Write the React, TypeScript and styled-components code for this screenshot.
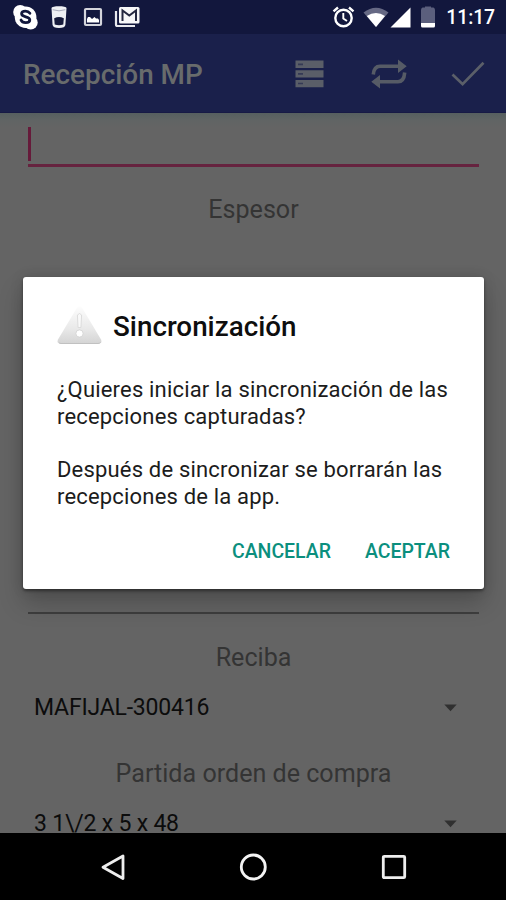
import React from "react";
import styled, { createGlobalStyle } from "styled-components";

const Global = createGlobalStyle`
  * { box-sizing: border-box; }
  body { margin: 0; background: #000; font-family: Roboto, "Liberation Sans", sans-serif; }
  svg { display: block; flex: none; }
`;

const Screen = styled.div`
  position: relative;
  width: 506px;
  height: 900px;
  display: flex;
  flex-direction: column;
  overflow: hidden;
`;

const StatusBar = styled.header`
  height: 34px;
  flex: none;
  display: flex;
  align-items: center;
  justify-content: space-between;
  padding: 0 11px 0 12px;
  background: #12173d;
`;

const StatusGroup = styled.div`
  display: flex;
  align-items: center;
`;

const Clock = styled.span`
  margin-left: 10px;
  padding-top: 2px;
  font-size: 19.4px;
  font-weight: 500;
  line-height: 32px;
  color: #fff;
  letter-spacing: -0.1px;
`;

const Toolbar = styled.div`
  height: 79px;
  flex: none;
  display: flex;
  align-items: center;
  justify-content: space-between;
  padding: 2px 21px 0 23px;
  background: #1a204b;
  border-bottom: 1px solid #171a45;
`;

const ToolbarTitle = styled.h1`
  margin: 0;
  padding-top: 2px;
  font-size: 27.9px;
  font-weight: 500;
  line-height: 36px;
  color: #686b6c;
`;

const Form = styled.main`
  height: 720px;
  flex: none;
  padding: 13px 27px 0 28px;
  overflow: hidden;
  background: linear-gradient(#566060 0, #606464 7px, #646464 14px);
`;

const TextField = styled.div<{ $focused?: boolean }>`
  display: flex;
  height: ${(p) => (p.$focused ? 41 : 46)}px;
  border-bottom: ${(p) => (p.$focused ? "3px solid #66233f" : "2px solid #3e3e3e")};
`;

const Caret = styled.div`
  width: 3px;
  height: 34px;
  margin-top: 1px;
  background: #661a3a;
`;

const FieldLabel = styled.div<{ $top: number }>`
  margin-top: ${(p) => p.$top}px;
  text-align: center;
  font-size: 25.1px;
  line-height: 34px;
  color: #343434;
  white-space: nowrap;
`;

const Gap = styled.div`
  height: 341px;
`;

const Spinner = styled.div<{ $top: number }>`
  margin-top: ${(p) => p.$top}px;
  height: 34px;
  padding: 0 22px 0 6px;
  display: flex;
  align-items: center;
  justify-content: space-between;
  font-size: 23px;
  letter-spacing: -0.2px;
  line-height: 34px;
  color: #0c0c0c;
  white-space: pre;
`;

const NavBar = styled.nav`
  height: 67px;
  flex: none;
  display: flex;
  align-items: center;
  justify-content: center;
  gap: 114px;
  background: #000;
`;

const Dialog = styled.section`
  position: absolute;
  left: 23px;
  top: 277px;
  width: 461px;
  height: 312px;
  padding: 27px 34px 0 34px;
  display: flex;
  flex-direction: column;
  background: #fff;
  border-radius: 3px;
  box-shadow: 0 14px 24px rgba(0, 0, 0, 0.22), 0 2px 3px rgba(0, 0, 0, 0.4), 0 0 14px rgba(0, 0, 0, 0.12);
`;

const DialogHead = styled.div`
  display: flex;
  align-items: center;
  gap: 11px;
  height: 44px;
`;

const DialogTitle = styled.h2`
  margin: 0;
  padding-top: 2px;
  font-size: 27.8px;
  font-weight: 500;
  line-height: 36px;
  color: #0e0e0e;
`;

const Message = styled.p`
  margin: 29px 0 0;
  font-size: 22px;
  line-height: 26.7px;
  letter-spacing: 0.18px;
  color: #1c1c1c;
  white-space: pre;
`;

const Buttons = styled.div`
  margin-top: 27px;
  display: flex;
  justify-content: flex-end;
  gap: 34px;
`;

const TextButton = styled.button`
  padding: 0;
  border: 0;
  background: none;
  font: 500 19.5px/28px Roboto, "Liberation Sans", sans-serif;
  letter-spacing: -0.02px;
  color: #0b8f7e;
`;

const SkypeIcon = () => (
  <svg width="28" height="28" viewBox="0 0 28 28">
    <g fill="#fff">
      <circle cx="13.6" cy="14.2" r="10.8" />
      <circle cx="8.2" cy="9" r="7" />
      <circle cx="18.7" cy="19.6" r="7" />
    </g>
    <path d="M17.900 10.300c-1-1.500-2.400-2.200-4.400-2.200-2.300 0-3.900 1-3.900 2.700 0 4 8.200 2 8.200 6 0 1.900-1.700 2.900-4.100 2.900-2.300 0-4-.9-4.700-2.700" fill="none" stroke="#12173d" strokeWidth="2.800" strokeLinecap="round" />
  </svg>
);

const CupIcon = () => (
  <svg width="18" height="24" viewBox="0 0 18 24">
    <path d="M1.500 3C1.500.5 16.500.5 16.500 3L15.400 20Q15 23 9 23T2.600 20Z" fill="#eff0f4" />
    <path d="M2.700 4.700Q9 7 15.300 4.700" fill="none" stroke="#a8abba" strokeWidth="1" />
    <path d="M4.200 13.200Q9 11 13.800 13.200L13.300 19.400Q9 21 4.700 19.400Z" fill="#161a3b" />
  </svg>
);

const PictureIcon = () => (
  <svg width="20" height="20" viewBox="0 0 20 20">
    <rect x="2" y="2" width="16" height="16" rx="1" fill="#12173d" stroke="#d4d5dc" strokeWidth="2.200" />
    <path d="M4 15.500V12L5 10H7L9 12 11.500 10 13 11.500H15L16 13V15.500Z" fill="#fff" />
  </svg>
);

const MailIcon = () => (
  <svg width="26" height="22" viewBox="0 0 26 22">
    <path d="M2 5V18.500Q2 20 3.500 20H21" fill="none" stroke="#e8e9ee" strokeWidth="2.200" />
    <rect x="5" y="1" width="20.500" height="16.500" rx="1.500" fill="#f7f7f8" />
    <path d="M8.500 15V4.500L15.300 9.500 22 4.500V15" fill="none" stroke="#24273f" strokeWidth="2" />
  </svg>
);

const AlarmIcon = () => (
  <svg width="23" height="22" viewBox="0 0 23 22" fill="none" stroke="#fff">
    <circle cx="11.500" cy="12" r="8.200" strokeWidth="2.400" />
    <path d="M1.500 5.300L6 1.500M21.500 5.300L17 1.500" strokeWidth="2.400" />
    <path d="M11.300 7V12.500L15 15" strokeWidth="1.900" />
  </svg>
);

const WifiIcon = () => (
  <svg width="26" height="21" viewBox="0 0 26 21">
    <path d="M.5 5.500Q13-4 25.500 5.500L13 20Z" fill="#666984" />
    <path d="M3.800 9Q13 3 22 9L13 20Z" fill="#fff" />
  </svg>
);

const SignalIcon = () => (
  <svg width="21" height="21" viewBox="0 0 21 21">
    <path d="M20.500.5V20.500H.5Z" fill="#fff" />
  </svg>
);

const BatteryIcon = () => (
  <svg width="16" height="22" viewBox="0 0 16 22">
    <path d="M5 .5H11V1.500H13.500Q15 2 15 4V17H1V4Q1 2 2.500 1.500H5Z" fill="#5b5f7d" />
    <path d="M1 17H15V20Q15 21.500 13.500 21.500H2.500Q1 21.500 1 20Z" fill="#fff" />
  </svg>
);

const StorageIcon = () => (
  <svg width="29" height="28" viewBox="0 0 29 28">
    <path d="M.5.500H28.500V8H.5ZM.5 10.200H28.500V17.600H.5ZM.5 19.900H28.500V27.200H.5Z" fill="#5a5e68" />
    <path d="M3 4.400H8M3 13.900H8M3 23.500H8" stroke="#353a55" strokeWidth="1.600" />
  </svg>
);

const RepeatIcon = () => (
  <svg width="36" height="30" viewBox="0 0 36 30">
    <path d="M2.300 15.500Q3 7.300 9 7.300H28M33.700 13.500Q33 22.700 27 22.700H8" fill="none" stroke="#565b66" strokeWidth="3.600" />
    <path d="M27 .5L35.700 7.300 27 14.100ZM9 15.900L.3 22.700 9 29.500Z" fill="#565b66" />
  </svg>
);

const CheckIcon = () => (
  <svg width="34" height="26" viewBox="0 0 34 26">
    <path d="M1.500 13.500L11.600 23.200 32.500 1.700" fill="none" stroke="#5b5f69" strokeWidth="2.700" />
  </svg>
);

const WarningIcon = () => (
  <svg width="45" height="44" viewBox="0 0 45 44">
    <defs>
      <linearGradient id="warn" x1="0" y1="0" x2="0" y2="1">
        <stop offset="0" stopColor="#fdfdfd" />
        <stop offset="0.600" stopColor="#e9e9e9" />
        <stop offset="1" stopColor="#d4d4d4" />
      </linearGradient>
    </defs>
    <path d="M19.500 4.500Q22.500 0 25.500 4.500L44 35.500Q45.500 39.500 41.500 39.500H3.500Q-.5 39.500 1 35.500Z" fill="url(#warn)" />
    <path d="M2 38.800Q3 39.500 4 39.500H41Q42.500 39.500 43.500 38.500" fill="none" stroke="#c1c1c1" strokeWidth="1" />
    <path d="M20.400 11Q22.500 8 24.600 11L23.900 23.500H21.100Z" fill="#f9f9f9" stroke="#d6d6d6" strokeWidth=".8" />
    <circle cx="22.500" cy="29.500" r="3.600" fill="#fff" stroke="#d0d0d0" strokeWidth=".8" />
  </svg>
);

const DropArrow = () => (
  <svg width="13" height="8" viewBox="0 0 13 8">
    <path d="M.3.500H12.700L6.500 7.300Z" fill="#303030" />
  </svg>
);

const BackIcon = () => (
  <svg width="26" height="28" viewBox="0 0 26 28">
    <path d="M24 3V25.500L4 14.200Z" fill="none" stroke="#eee" strokeWidth="2.800" strokeLinejoin="round" />
  </svg>
);

const HomeIcon = () => (
  <svg width="28" height="28" viewBox="0 0 28 28">
    <circle cx="14.300" cy="14" r="12" fill="none" stroke="#f4f4f4" strokeWidth="2.800" />
  </svg>
);

const RecentIcon = () => (
  <svg width="26" height="26" viewBox="0 0 26 26">
    <rect x="2.300" y="2.300" width="21.400" height="21.400" rx="1" fill="none" stroke="#eee" strokeWidth="2.800" />
  </svg>
);

const LeftIcons = styled(StatusGroup)`
  & > svg:nth-child(2) { margin-left: 10px; }
  & > svg:nth-child(3) { margin-left: 15px; }
  & > svg:nth-child(4) { margin-left: 11px; }
`;

const RightIcons = styled(StatusGroup)`
  & > svg:nth-child(2) { margin-left: 8px; }
  & > svg:nth-child(3) { margin-left: 1px; }
  & > svg:nth-child(4) { margin-left: 9px; }
`;

const ToolbarActions = styled.div`
  display: flex;
  align-items: center;
  & > svg:nth-child(2) { margin: 0 44px 0 47px; }
`;

export default function App() {
  return (
    <>
      <Global />
      <Screen>
        <StatusBar>
          <LeftIcons>
            <SkypeIcon />
            <CupIcon />
            <PictureIcon />
            <MailIcon />
          </LeftIcons>
          <RightIcons>
            <AlarmIcon />
            <WifiIcon />
            <SignalIcon />
            <BatteryIcon />
            <Clock>11:17</Clock>
          </RightIcons>
        </StatusBar>
        <Toolbar>
          <ToolbarTitle>Recepción MP</ToolbarTitle>
          <ToolbarActions>
            <StorageIcon />
            <RepeatIcon />
            <CheckIcon />
          </ToolbarActions>
        </Toolbar>
        <Form>
          <TextField $focused>
            <Caret />
          </TextField>
          <FieldLabel $top={26}>Espesor</FieldLabel>
          <Gap />
          <TextField />
          <FieldLabel $top={27}>Reciba</FieldLabel>
          <Spinner $top={16}>
            MAFIJAL-300416
            <DropArrow />
          </Spinner>
          <FieldLabel $top={32}>Partida orden de compra</FieldLabel>
          <Spinner $top={16}>
            {"3 1\\/2 x 5 x 48"}
            <DropArrow />
          </Spinner>
        </Form>
        <NavBar>
          <BackIcon />
          <HomeIcon />
          <RecentIcon />
        </NavBar>
        <Dialog role="dialog">
          <DialogHead>
            <WarningIcon />
            <DialogTitle>Sincronización</DialogTitle>
          </DialogHead>
          <Message>
            {"¿Quieres iniciar la sincronización de las\nrecepciones capturadas?\n\nDespués de sincronizar se borrarán las\nrecepciones de la app."}
          </Message>
          <Buttons>
            <TextButton>CANCELAR</TextButton>
            <TextButton>ACEPTAR</TextButton>
          </Buttons>
        </Dialog>
      </Screen>
    </>
  );
}
